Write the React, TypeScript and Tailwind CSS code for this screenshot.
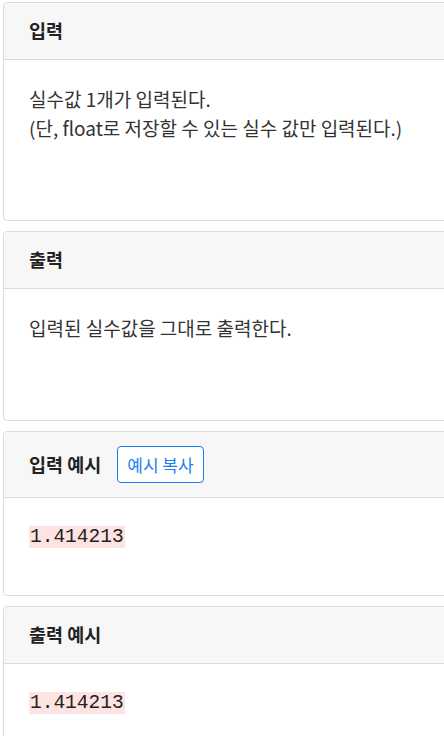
import React from 'react';

const kr = '"Noto Sans CJK KR", "Noto Sans", sans-serif';

function Card({
  title,
  button,
  bodyHeight,
  children,
}: {
  title: string;
  button?: boolean;
  bodyHeight: string;
  children: React.ReactNode;
}) {
  return (
    <div className="shrink-0 w-[470px] rounded-[4px] border border-[#dcdcdc] overflow-hidden bg-white">
      <div
        className={`flex items-center gap-[16px] bg-[#f7f7f7] border-b border-[#dcdcdc] pl-[25px] ${
          button ? 'h-[66px]' : 'h-[57px]'
        }`}
      >
        <span className="text-[18.5px] font-bold text-[#222]">{title}</span>
        {button && (
          <button className="h-[37px] px-[9px] rounded-[4px] border border-[#1a7cf0] text-[17px] text-[#1a7cf0] bg-white">
            예시 복사
          </button>
        )}
      </div>
      <div className={`${bodyHeight} pl-[25px] pt-[24px]`}>{children}</div>
    </div>
  );
}

function Code({ value }: { value: string }) {
  return (
    <span
      className="inline-block bg-[#fde3e1] text-[#222] text-[19.5px] leading-[22px] px-[1px] mt-[4px]"
      style={{ fontFamily: '"Liberation Mono", "DejaVu Sans Mono", monospace' }}
    >
      {value}
    </span>
  );
}

export default function App() {
  return (
    <div
      className="w-[444px] h-[736px] overflow-hidden bg-white pl-[3px] pt-[2px] flex flex-col gap-[10px]"
      style={{ fontFamily: kr }}
    >
      <Card title="입력" bodyHeight="h-[160px]">
        <p className="text-[19px] leading-[29px] text-[#333]">
          실수값 1개가 입력된다.
          <br />
          (단, float로 저장할 수 있는 실수 값만 입력된다.)
        </p>
      </Card>
      <Card title="출력" bodyHeight="h-[131px]">
        <p className="text-[19px] leading-[29px] text-[#333]">입력된 실수값을 그대로 출력한다.</p>
      </Card>
      <Card title="입력 예시" button bodyHeight="h-[97px]">
        <Code value="1.414213" />
      </Card>
      <Card title="출력 예시" bodyHeight="h-[98px]">
        <Code value="1.414213" />
      </Card>
    </div>
  );
}
